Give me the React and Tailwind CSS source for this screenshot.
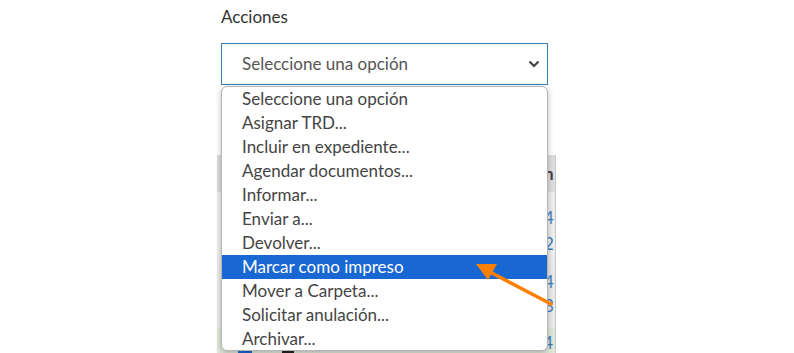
import React from "react";

const items = [
  "Seleccione una opción",
  "Asignar TRD...",
  "Incluir en expediente...",
  "Agendar documentos...",
  "Informar...",
  "Enviar a...",
  "Devolver...",
  "Marcar como impreso",
  "Mover a Carpeta...",
  "Solicitar anulación...",
  "Archivar...",
];

export default function App() {
  return (
    <div
      className="relative w-[794px] h-[353px] overflow-hidden bg-white"
      style={{ fontFamily: "Lato, 'Noto Sans', sans-serif" }}
    >
      <div className="flex flex-col ml-[221px] w-[327px]">
        <div className="h-[43px] pt-[5px] text-[17px] leading-[24px] text-[#333]">Acciones</div>
        <div className="h-[42px] border border-[#3a7fb5] flex items-center justify-between pl-[20px] pr-[7px] text-[17px] text-[#555]">
          <span>Seleccione una opción</span>
          <svg width="12" height="8" viewBox="0 0 12 8">
            <polyline points="1.5,1.5 6,6 10.5,1.5" fill="none" stroke="#444" strokeWidth="2.2" />
          </svg>
        </div>
        {/* background table */}
        <div className="mt-[70px] -ml-[4px] w-[339px] h-[198px] bg-[#ededed] border-r border-[#c8c8c8] flex flex-col text-[17px]">
          <div className="h-[37px] bg-[#dedede] flex items-center pl-[327px] font-bold text-[#444] overflow-hidden whitespace-nowrap">n</div>
          <div className="h-[70px] bg-[#efefef] flex flex-col pl-[327px] pt-[13px] text-[#3c7fc0] leading-[26px] overflow-hidden whitespace-nowrap">
            <span>4</span>
            <span>2</span>
          </div>
          <div className="h-[66px] bg-[#ebebeb] flex flex-col pl-[327px] pt-[8px] text-[#3c7fc0] leading-[24px] overflow-hidden whitespace-nowrap">
            <span>4</span>
            <span>3</span>
          </div>
          <div className="flex-1 bg-[#dfe8d9] flex items-end pl-[21px] gap-[30px] overflow-hidden whitespace-nowrap text-[#3c7fc0]">
            <div className="w-[14px] h-[6px] bg-[#1967d2] rounded-t-sm"></div>
            <div className="w-[12px] h-[4px] bg-[#222]"></div>
            <div className="ml-auto pr-[2px] leading-[20px]">4</div>
          </div>
        </div>
      </div>

      {/* dropdown list */}
      <div className="absolute left-[221px] top-[86px] w-[327px] h-[265px] bg-white border border-[#b5b5b5] rounded-[6px] shadow-[0_2px_6px_rgba(0,0,0,0.25)] overflow-hidden flex flex-col">
        {items.map((t, i) => (
          <div
            key={t}
            className={
              i === 7
                ? "h-[24px] shrink-0 flex items-center pl-[20px] text-[17px] bg-[#1967d2] text-white"
                : "h-[24px] shrink-0 flex items-center pl-[20px] text-[17px] text-[#444]"
            }
          >
            {t}
          </div>
        ))}
      </div>

      {/* annotation arrow */}
      <svg className="absolute left-0 top-0 pointer-events-none" width="794" height="353">
        <line x1="551" y1="304" x2="488" y2="271" stroke="#ff8000" strokeWidth="3.5" strokeLinecap="round" />
        <polygon points="476,264 497,264 488,280" fill="#ff8000" />
      </svg>
    </div>
  );
}
